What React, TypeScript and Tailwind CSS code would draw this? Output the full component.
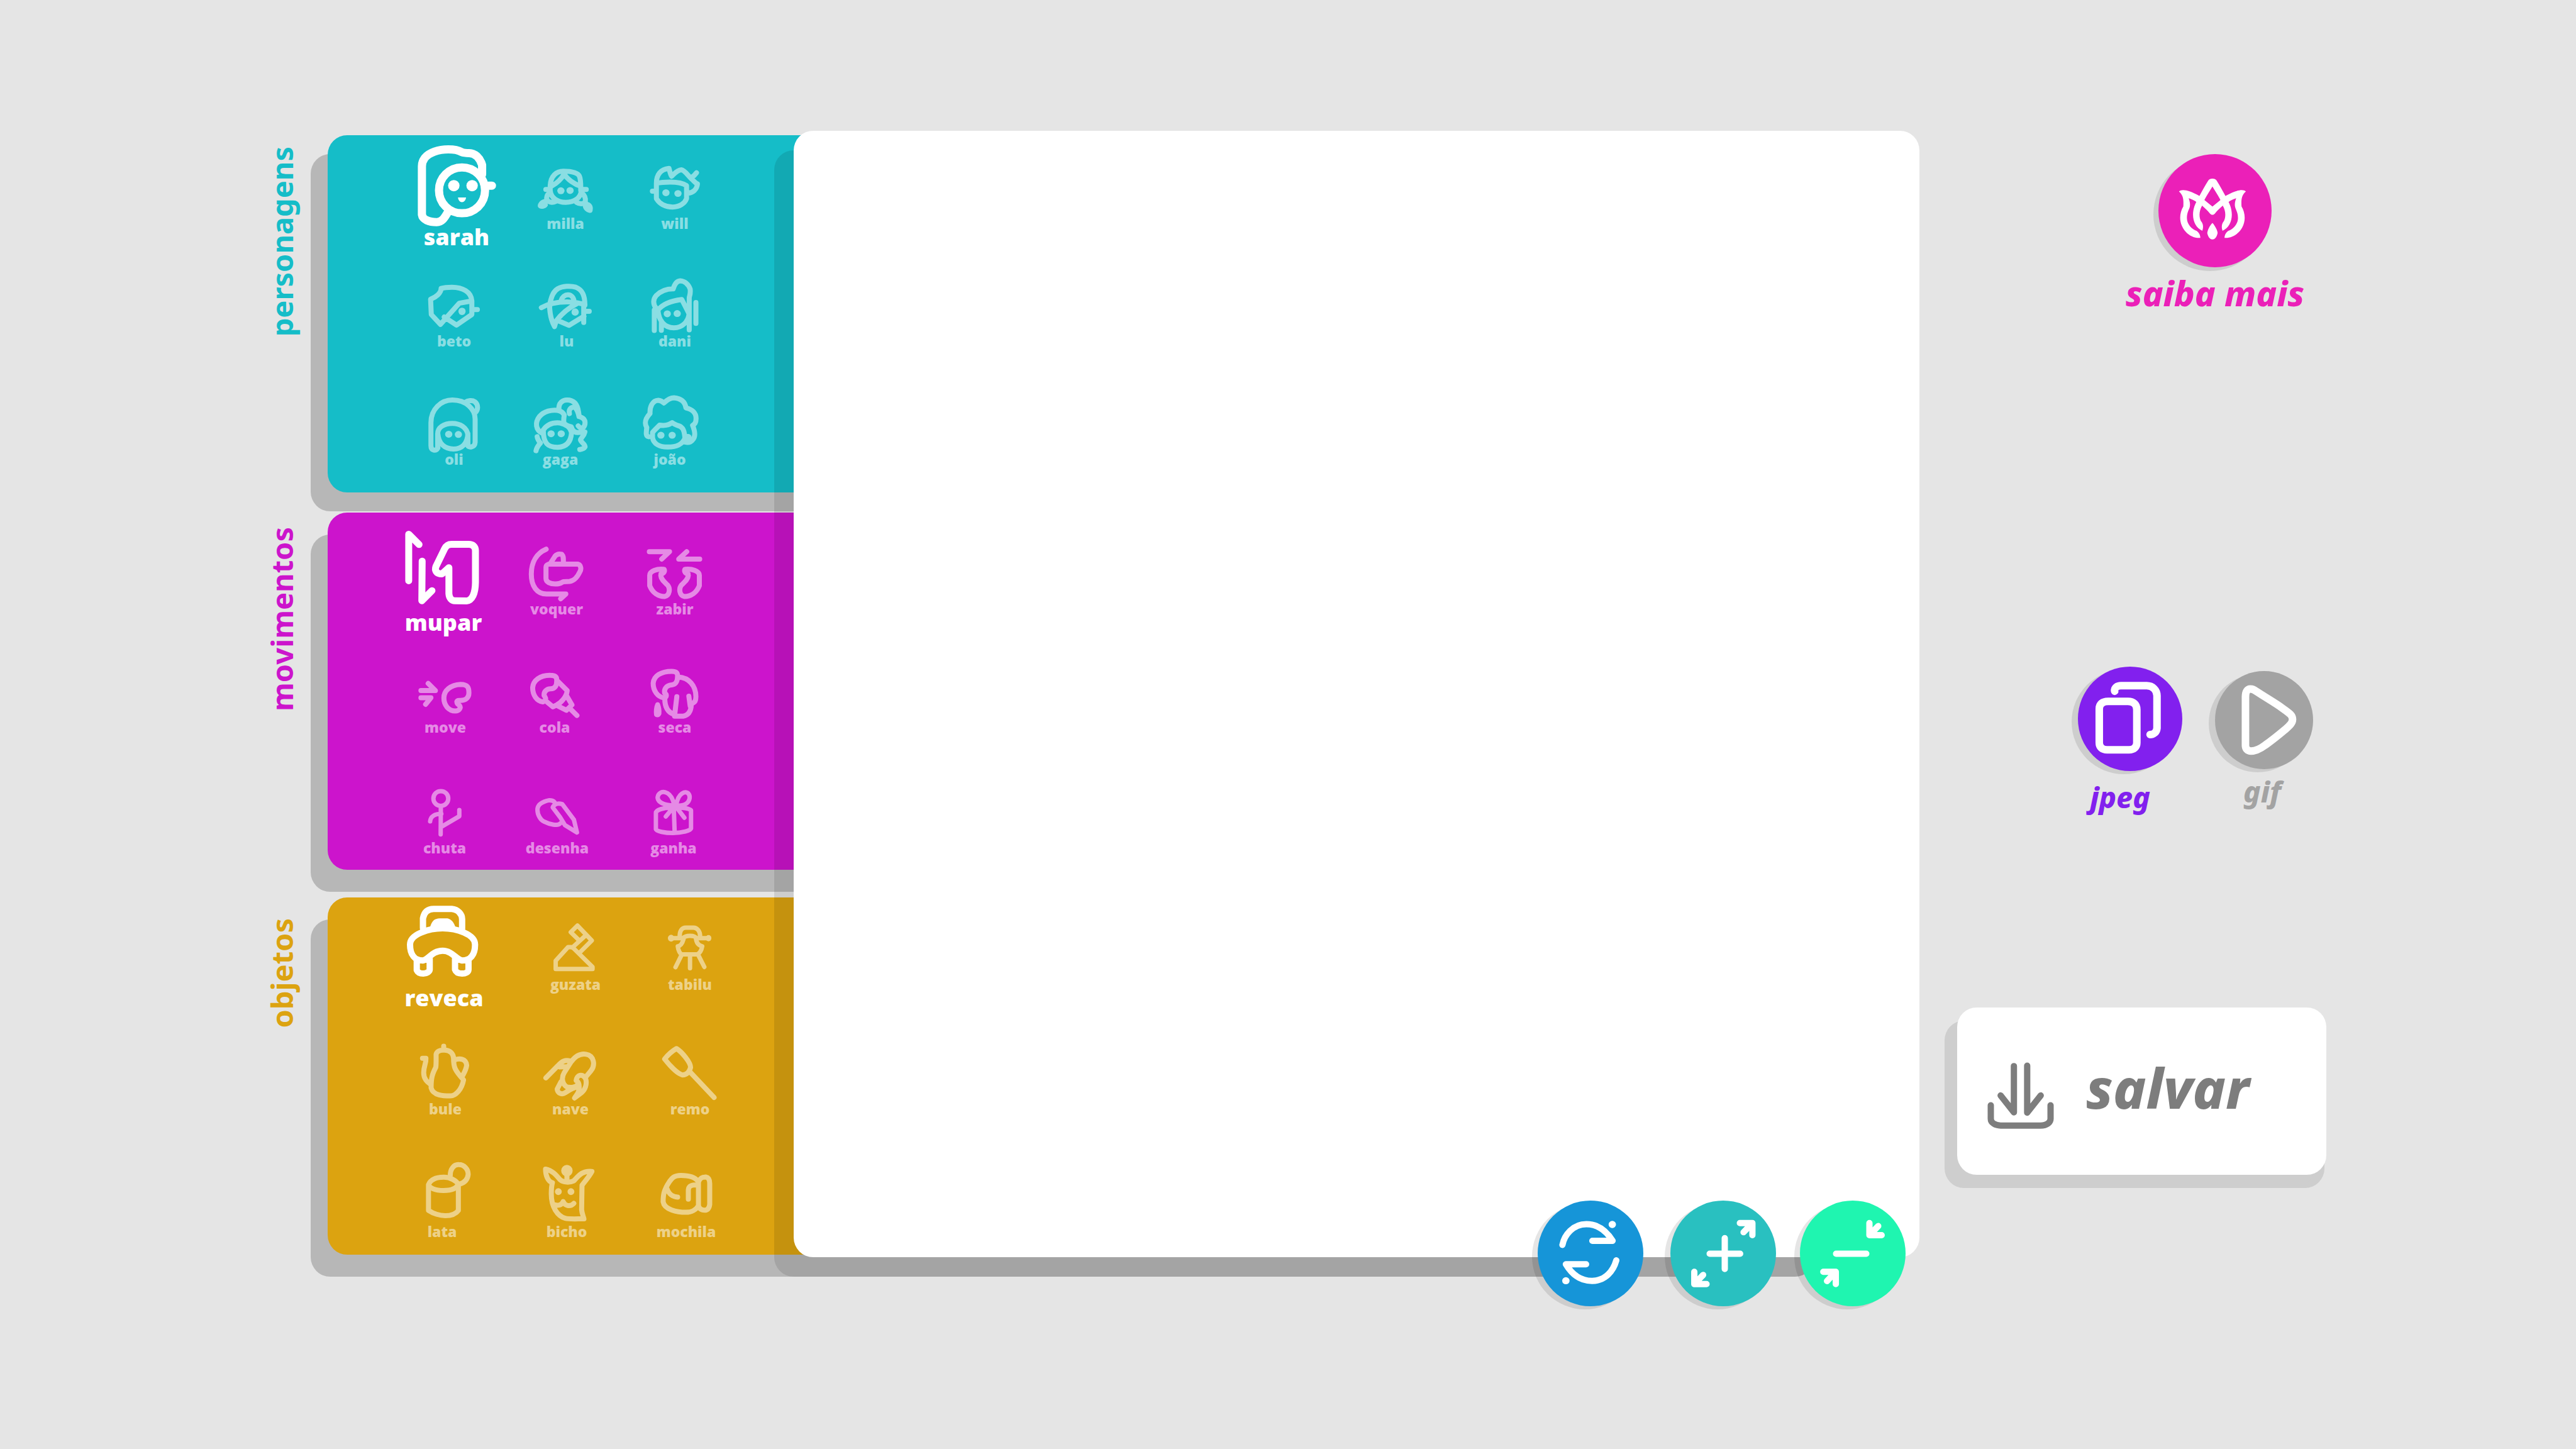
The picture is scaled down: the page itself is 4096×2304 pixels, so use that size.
import type { ReactNode } from "react";

type Dot = [number, number, number, number];

type Glyph = {
  box: string;
  stroke: number;
  d: string;
  solid?: string;
  dots?: Dot[];
};

type Item = { name: string; glyph: Glyph };

type Row = { layout: string; items: Item[] };

type Group = {
  title: string;
  color: string;
  panel: string;
  label: string;
  rows: Row[];
};

function Drawing({ glyph, className }: { glyph: Glyph; className: string }) {
  return (
    <svg
      viewBox={glyph.box}
      preserveAspectRatio="none"
      fill="none"
      stroke="currentColor"
      strokeWidth={glyph.stroke}
      strokeLinecap="round"
      strokeLinejoin="round"
      aria-hidden="true"
      className={`shrink-0 overflow-visible [&_*]:[vector-effect:non-scaling-stroke] ${className}`}
    >
      <path d={glyph.d} />
      {glyph.solid && <path d={glyph.solid} fill="currentColor" stroke="none" />}
      {glyph.dots?.map(([cx, cy, rx, ry]) => (
        <ellipse key={`${cx}-${cy}`} cx={cx} cy={cy} rx={rx} ry={ry} fill="currentColor" stroke="none" />
      ))}
    </svg>
  );
}

const personagens: Row[] = [
  {
    layout: "mt-[12px] pl-[112px] grid-cols-[186px_160px_188px]",
    items: [
      {
        name: "sarah",
        glyph: {
          box: "887 70 496 347",
          stroke: 13,
          d: "M1283 198 V160 C1270 130 1240 112 1208 112 C1190 112 1178 112 1165 108 C1140 98 1110 97 1087 97 C1030 97 975 110 950 132 C936 145 934 152 934 165 V362 C938 382 975 392 1020 392 C1050 392 1065 375 1084 352 M1166 170 C1240 170 1300 212 1300 263 C1300 315 1240 356 1166 356 C1092 356 1033 315 1033 263 C1033 212 1092 170 1166 170 Z M1310 244 H1340",
          solid: "M1143 292 H1190 C1187 304 1178 311 1166 311 C1154 311 1146 304 1143 292 Z",
          dots: [[1119, 244, 33, 23], [1225, 244, 33, 23]],
        },
      },
      {
        name: "milla",
        glyph: {
          box: "97 112 369 286",
          stroke: 8,
          d: "M202 265 V245 C205 205 235 187 270 187 C310 187 345 192 355 207 C363 220 362 235 362 265 M202 265 C205 295 240 313 283 313 C325 313 362 297 365 265 M210 247 C245 232 265 212 275 198 C292 220 330 240 360 247 M179 261 H202 M365 261 H391 M200 275 C185 280 182 292 184 302 C195 315 215 315 232 309 M368 275 C385 285 388 298 386 310 C375 322 355 320 340 313",
          solid: "M184 298 C150 300 135 318 137 330 C142 344 180 342 190 325 Z M385 308 C415 312 427 325 425 340 C424 355 418 357 405 355 C385 350 373 340 372 325 Z",
          dots: [[258, 266, 19, 14], [306, 265, 19, 14]],
        },
      },
      {
        name: "will",
        glyph: {
          box: "669 112 369 286",
          stroke: 8,
          d: "M757 236 C757 200 780 178 823 175 C828 188 830 200 837 207 C850 198 865 182 888 181 C905 182 925 207 943 219 C955 228 962 236 972 238 C970 262 945 275 922 276 M945 210 C955 205 960 200 967 193 M757 236 V298 C775 320 805 332 842 332 C878 332 905 318 915 298 V245 C895 235 865 231 830 231 C805 231 775 233 757 236 M736 268 H757",
          dots: [[807, 274, 19, 14], [870, 277, 19, 14]],
        },
      },
    ],
  },
  {
    layout: "mt-[29px] pl-[102px] grid-cols-[198px_160px_184px]",
    items: [
      {
        name: "beto",
        glyph: {
          box: "918 589 408 286",
          stroke: 8,
          d: "M1065 778 L1136 811 L1225 768 V713 C1222 675 1170 657 1110 657 C1085 657 1065 658 1047 662 C1047 682 1015 698 986 706 L990 768 L1043 808 L1152 722 L1225 713 M1230 748 H1257",
          dots: [[1168, 755, 21, 15]],
        },
      },
      {
        name: "lu",
        glyph: {
          box: "103 589 369 286",
          stroke: 8,
          d: "M200 722 C210 690 218 675 242 663 C265 652 310 651 335 657 C370 668 383 690 383 730 M155 740 C190 725 240 716 300 717 C340 718 365 723 383 727 M198 725 C198 760 208 795 224 817 L232 795 C260 765 300 740 345 722 M240 792 L300 812 L378 775 M377 735 V800 M385 755 H406 M258 712 C270 680 320 680 326 712",
          dots: [[332, 758, 19, 15]],
        },
      },
      {
        name: "dani",
        glyph: {
          box: "669 589 369 286",
          stroke: 8,
          d: "M755 742 C738 725 740 705 755 692 C780 672 810 664 845 664 C852 645 865 632 882 631 C905 632 925 645 934 665 C937 690 929 690 929 702 V830 M765 750 C790 725 840 712 890 707 C900 722 915 745 928 765 M765 750 C770 795 800 822 848 822 C895 822 925 795 928 765 M746 750 V833 M783 795 V832 M964 719 V804",
          dots: [[814, 765, 19, 14], [866, 764, 19, 14]],
        },
      },
    ],
  },
  {
    layout: "mt-[60px] pl-[112px] grid-cols-[178px_160px_188px]",
    items: [
      {
        name: "oli",
        glyph: {
          box: "916 1067 408 286",
          stroke: 8,
          d: "M1026 1308 C1015 1321 986 1320 986 1298 V1205 C986 1150 1045 1113 1110 1113 C1190 1113 1242 1150 1242 1190 V1285 C1240 1308 1202 1306 1200 1298 V1255 C1195 1225 1155 1208 1110 1208 C1060 1208 1025 1225 1025 1250 V1308 M1026 1250 C1030 1290 1065 1312 1117 1312 C1165 1312 1198 1290 1200 1250 M1185 1122 C1200 1115 1225 1113 1240 1120 C1262 1132 1260 1155 1242 1165",
          dots: [[1089, 1252, 21, 14], [1145, 1253, 21, 14]],
        },
      },
      {
        name: "gaga",
        glyph: {
          box: "70 1067 369 286",
          stroke: 8,
          d: "M160 1248 C125 1235 120 1205 145 1180 C170 1158 210 1152 240 1155 C260 1158 270 1166 275 1174 C272 1188 270 1198 274 1208 C285 1216 300 1220 312 1222 C318 1240 335 1250 362 1243 M165 1235 C185 1212 215 1204 250 1206 C285 1212 308 1225 313 1245 C310 1285 285 1304 240 1305 C190 1305 165 1290 165 1235 M247 1150 C245 1125 265 1113 290 1113 C330 1113 345 1135 350 1162 C352 1178 355 1182 365 1184 C390 1192 388 1215 372 1227 C365 1232 352 1222 348 1218 M302 1168 C296 1150 312 1142 328 1142 C342 1150 348 1165 352 1180 M133 1262 C135 1272 142 1280 150 1288 C138 1298 130 1308 127 1319 M383 1243 C378 1262 360 1268 360 1275 C362 1285 383 1290 384 1303 C378 1312 365 1313 356 1314",
          dots: [[206, 1250, 19, 14], [259, 1250, 19, 14]],
        },
      },
      {
        name: "joão",
        glyph: {
          box: "641 1067 369 286",
          stroke: 8,
          d: "M715 1262 C698 1260 702 1245 705 1225 C690 1205 698 1188 722 1168 C720 1140 735 1115 765 1114 C780 1115 788 1120 795 1125 C815 1110 830 1104 848 1104 C875 1106 905 1115 910 1145 C940 1150 965 1165 963 1190 C963 1205 955 1212 945 1216 C955 1235 965 1260 945 1275 C935 1285 920 1287 905 1284 M735 1245 C745 1235 760 1225 772 1215 C795 1218 820 1215 838 1205 C850 1213 870 1217 880 1220 C900 1230 902 1245 905 1268 C890 1295 860 1304 815 1304 C770 1304 740 1290 735 1265 Z",
          dots: [[779, 1256, 19, 14], [838, 1256, 19, 14], [920, 1264, 20, 13]],
        },
      },
    ],
  },
];

const movimentos: Row[] = [
  {
    layout: "mt-[25px] pl-[84px] grid-cols-[200px_160px_216px]",
    items: [
      {
        name: "mupar",
        glyph: {
          box: "810 85 496 347",
          stroke: 11,
          d: "M857 298 V109 L917 151 M935 218 L933 379 L992 338 M1244 305 V175 C1243 158 1228 150 1205 150 H1105 C1085 150 1075 155 1065 168 L1015 240 C1007 255 1015 270 1050 270 L1090 245 V350 C1092 368 1105 379 1125 379 L1192 380 C1225 378 1243 350 1244 305 Z",
        },
      },
      {
        name: "voquer",
        glyph: {
          box: "48 130 369 286",
          stroke: 8,
          d: "M178 174 C130 190 100 225 100 275 C100 325 130 356 180 356 H281 L254 375 M177 247 C177 240 180 238 190 235 H345 C360 238 363 255 355 265 C340 290 325 303 300 305 L268 306 C250 315 240 315 225 315 C200 315 177 308 177 293 Z M200 232 L225 202 C235 193 250 193 260 195 C270 203 268 212 268 235",
        },
      },
      {
        name: "zabir",
        glyph: {
          box: "668 130 369 286",
          stroke: 8,
          d: "M719 184 H825 L784 214 M983 214 H873 L915 184 M780 275 C802 272 800 256 795 256 C760 253 721 262 721 280 V322 C735 350 765 366 800 366 C825 362 830 335 815 320 C795 305 780 295 779 281 M922 275 C900 272 902 256 907 256 C942 253 981 262 981 280 V322 C967 350 937 366 902 366 C877 362 872 335 887 320 C907 305 922 295 923 281",
        },
      },
    ],
  },
  {
    layout: "mt-[30px] pl-[93px] grid-cols-[188px_160px_222px]",
    items: [
      {
        name: "move",
        glyph: {
          box: "866 607 408 286",
          stroke: 8,
          d: "M929 745 H1013 L971 716 M929 774 H987 L956 801 M1158 785 C1185 785 1207 775 1207 755 C1207 735 1203 720 1158 720 C1100 722 1062 745 1062 775 C1062 805 1090 828 1128 828 C1152 828 1162 815 1153 806 C1142 800 1137 797 1137 790 C1140 783 1150 785 1158 785",
        },
      },
      {
        name: "cola",
        glyph: {
          box: "38 607 369 286",
          stroke: 8,
          d: "M160 791 C130 788 107 765 107 733 C110 705 145 682 200 683 C225 683 233 690 233 700 C235 725 225 738 200 738 C180 738 165 750 167 765 C175 775 178 778 172 785 L213 811 L232 804 C255 795 285 770 288 745 L240 708 M284 765 L313 803 L284 825 L232 805 M305 820 L339 846",
        },
      },
      {
        name: "seca",
        glyph: {
          box: "667 607 369 286",
          stroke: 8,
          d: "M795 775 C760 770 738 745 738 715 C742 685 780 667 835 667 C860 667 866 675 866 685 C866 710 855 720 835 722 C805 724 795 740 798 755 C812 762 808 770 799 775 C798 815 820 835 848 842 M870 690 C925 692 962 725 962 770 C962 785 955 793 948 795 M862 770 L850 849 H895 C925 845 937 825 938 800 M925 768 L932 808",
          solid: "M750 798 C755 790 768 790 773 798 C780 812 783 825 781 840 C775 857 750 857 743 845 C740 830 742 812 750 798 Z",
        },
      },
    ],
  },
  {
    layout: "mt-[64px] pl-[87px] grid-cols-[198px_160px_210px]",
    items: [
      {
        name: "chuta",
        glyph: {
          box: "863 1096 408 286",
          stroke: 7,
          d: "M1045 1152 C1069 1152 1088 1165 1088 1182 C1088 1199 1069 1212 1045 1212 C1021 1212 1002 1199 1002 1182 C1002 1165 1021 1152 1045 1152 Z M1045 1212 L1044 1328 M1048 1244 C1010 1244 985 1255 983 1275 M1048 1297 L1152 1254 V1229",
        },
      },
      {
        name: "desenha",
        glyph: {
          box: "51 1096 369 286",
          stroke: 7,
          d: "M222 1197 C215 1190 205 1189 195 1189 C155 1195 132 1208 132 1228 C132 1250 150 1270 165 1275 C195 1287 240 1295 252 1283 M212 1218 C220 1204 240 1200 262 1205 L323 1268 L339 1320 L276 1290 L250 1257 Z",
        },
      },
      {
        name: "ganha",
        glyph: {
          box: "661 1096 369 286",
          stroke: 7,
          d: "M840 1219 C790 1218 753 1230 753 1240 V1307 C755 1315 800 1322 842 1322 C890 1322 935 1312 937 1304 V1230 C925 1222 890 1218 840 1219 M847 1225 L851 1315 M848 1210 C790 1210 762 1195 762 1177 C768 1145 830 1145 848 1205 M858 1210 C910 1215 930 1195 930 1175 C925 1145 875 1150 860 1205 M848 1215 L805 1255 M858 1215 L902 1260",
        },
      },
    ],
  },
];

const objetos: Row[] = [
  {
    layout: "mt-[10px] pl-[56px] grid-cols-[258px_160px_204px]",
    items: [
      {
        name: "reveca",
        glyph: {
          box: "812 76 496 327",
          stroke: 10,
          d: "M1052 170 C975 170 863 192 863 232 C863 270 890 293 937 293 C970 290 990 256 1052 256 C1110 256 1130 290 1165 293 C1215 293 1240 270 1240 232 C1240 192 1130 170 1052 170 Z M938 170 V132 C945 108 965 96 1000 96 H1105 C1140 98 1165 115 1165 135 V172 M902 290 V330 C910 343 935 343 940 343 C960 343 977 335 977 328 V285 M1124 285 V328 C1130 340 1150 343 1165 343 C1185 343 1201 338 1202 328 V290",
          solid: "M978 168 C990 140 1005 133 1035 132 H1080 C1105 136 1120 150 1127 168 Z",
        },
      },
      {
        name: "guzata",
        glyph: {
          box: "147 115 369 269",
          stroke: 7,
          d: "M228 294 L293 242 H315 L421 318 V326 H228 Z M315 244 L384 198 M307 185 L342 160 L417 217 L358 260 M307 185 L352 217",
        },
      },
      {
        name: "tabilu",
        glyph: {
          box: "747 115 369 269",
          stroke: 7,
          d: "M878 200 C878 180 890 168 910 168 H950 C970 168 985 182 985 200 M830 208 H895 C905 200 920 199 932 199 C950 199 960 201 965 208 H1025 M898 212 C892 228 882 238 868 239 C870 255 880 268 890 270 H970 C985 265 992 255 996 239 C978 236 965 225 963 208 M888 272 L856 319 M932 272 V323 M975 272 L1007 318",
          dots: [[833, 208, 17, 13], [1029, 208, 15, 12]],
        },
      },
    ],
  },
  {
    layout: "mt-[40px] pl-[68px] grid-cols-[238px_160px_220px]",
    items: [
      {
        name: "bule",
        glyph: {
          box: "866 589 408 269",
          stroke: 8,
          d: "M1017 650 C1020 640 1040 633 1060 634 C1100 632 1118 650 1118 665 C1118 700 1125 710 1176 748 C1165 785 1130 809 1100 809 C1060 809 1000 808 988 778 C988 740 995 725 1015 700 C1018 690 1017 670 1017 650 Z M1061 619 V632 M938 665 H958 C960 685 945 695 945 720 C945 745 965 755 985 765 M1125 671 C1150 665 1190 665 1194 692 C1190 712 1175 725 1168 735",
        },
      },
      {
        name: "nave",
        glyph: {
          box: "123 589 369 269",
          stroke: 8,
          d: "M179 740 L240 695 C265 675 280 671 305 675 M250 698 L290 697 M392 733 L415 713 C440 690 430 655 390 650 C350 645 325 665 310 680 L275 720 C258 740 265 765 290 775 C320 780 345 770 345 765 M258 755 L238 783 C240 800 265 805 280 797 C300 787 325 774 350 775 M338 750 C340 730 370 720 388 745 C395 765 385 785 365 797 L329 817 C345 800 358 790 352 765 C350 755 340 752 338 750",
        },
      },
      {
        name: "remo",
        glyph: {
          box: "749 589 369 269",
          stroke: 8,
          d: "M863 628 C835 640 815 655 801 668 C830 695 870 725 895 729 C915 728 930 720 937 700 C937 680 890 640 863 628 Z M935 718 L1060 815",
        },
      },
    ],
  },
  {
    layout: "mt-[67px] pl-[64px] grid-cols-[236px_160px_220px]",
    items: [
      {
        name: "lata",
        glyph: {
          box: "848 1059 408 269",
          stroke: 8,
          d: "M973 1150 C985 1130 1020 1121 1062 1121 C1100 1121 1135 1135 1145 1148 C1135 1165 1100 1172 1060 1172 C1010 1172 980 1162 973 1150 Z M973 1150 V1248 C1000 1260 1040 1268 1070 1268 C1100 1268 1130 1263 1146 1248 V1148 M1099 1116 C1098 1090 1120 1072 1148 1073 C1180 1073 1203 1090 1203 1110 C1200 1130 1180 1142 1155 1147",
        },
      },
      {
        name: "bicho",
        glyph: {
          box: "103 1059 369 269",
          stroke: 8,
          d: "M177 1090 C210 1095 230 1110 252 1130 C270 1142 305 1142 325 1135 C350 1115 370 1095 420 1099 C405 1120 385 1135 368 1152 L366 1245 C368 1262 375 1270 378 1280 C340 1280 300 1282 280 1278 C240 1270 207 1235 207 1185 C207 1160 210 1150 213 1142 C190 1138 177 1115 177 1090 Z M289 1110 V1138 M215 1224 C240 1232 262 1228 269 1214 C278 1230 305 1236 325 1221",
          dots: [[289, 1096, 30, 22], [244, 1176, 18, 13], [310, 1176, 18, 13]],
        },
      },
      {
        name: "mochila",
        glyph: {
          box: "728 1059 369 269",
          stroke: 8,
          d: "M973 1135 C955 1118 915 1114 885 1114 C845 1114 835 1128 825 1138 C795 1170 792 1190 792 1215 C798 1245 865 1255 912 1255 C940 1255 965 1245 977 1230 M977 1140 C985 1120 1005 1120 1015 1120 C1030 1122 1036 1130 1036 1145 V1225 C1033 1240 1025 1247 1010 1247 C990 1247 978 1240 977 1228 Z M812 1165 C825 1190 845 1196 868 1197 M924 1205 V1170 C925 1155 940 1150 965 1150",
        },
      },
    ],
  },
];

const groups: Group[] = [
  {
    title: "personagens",
    color: "text-[#15bdc8]",
    panel: "bg-[#15bdc8] shadow-[-27px_30px_0_rgba(0,0,0,0.2)]",
    label: "pt-[18px]",
    rows: personagens,
  },
  {
    title: "movimentos",
    color: "text-[#cc14cc]",
    panel: "bg-[#cc14cc] shadow-[-27px_35px_0_rgba(0,0,0,0.2)]",
    label: "pt-[23px]",
    rows: movimentos,
  },
  {
    title: "objetos",
    color: "text-[#dca310]",
    panel: "bg-[#dca310] shadow-[-27px_35px_0_rgba(0,0,0,0.2)]",
    label: "pt-[33px]",
    rows: objetos,
  },
];

function Choice({ item, active, lowered }: { item: Item; active: boolean; lowered: boolean }) {
  if (active) {
    return (
      <button type="button" aria-pressed="true" className="flex flex-col items-center text-white">
        <Drawing glyph={item.glyph} className="-mb-[10px] size-[136px]" />
        <span className="text-[36px] leading-[48px]">{item.name}</span>
      </button>
    );
  }
  return (
    <button
      type="button"
      aria-pressed="false"
      className={`flex flex-col items-center text-white opacity-50 ${lowered ? "mt-[16px]" : ""}`}
    >
      <Drawing glyph={item.glyph} className="-mb-[16px] size-[112px]" />
      <span className="text-[23px] leading-[32px]">{item.name}</span>
    </button>
  );
}

function GroupPanel({ group }: { group: Group }) {
  return (
    <section className="flex">
      <div className={`mr-[43px] w-[60px] shrink-0 ${group.label}`}>
        <h2
          className={`rotate-180 font-['Noto_Sans',sans-serif] text-[47px] leading-[60px] font-bold [writing-mode:vertical-rl] ${group.color}`}
        >
          {group.title}
        </h2>
      </div>
      <div className={`mr-[140px] flex min-h-[568px] flex-1 flex-col rounded-[31px] ${group.panel}`}>
        {group.rows.map((row, r) => (
          <div key={row.items[0].name} className={`grid items-start ${row.layout}`}>
            {row.items.map((item, i) => (
              <Choice key={item.name} item={item} active={r === 0 && i === 0} lowered={r === 0} />
            ))}
          </div>
        ))}
      </div>
    </section>
  );
}

const sync: Glyph = {
  box: "146 138 371 654",
  stroke: 10,
  d: "M233 412 C240 350 270 284 317 284 C355 284 385 320 409 387 H338 M422 508 C412 570 385 635 337 635 C300 635 268 600 245 532 H316",
  dots: [[408, 286, 13, 22], [245, 634, 13, 22]],
};

const enlarge: Glyph = {
  box: "613 138 371 654",
  stroke: 10,
  d: "M804 371 V561 M751 467 H858 M857 277 H901 V352 M901 277 L870 334 M697 579 V655 H740 M697 655 L728 598",
};

const reduce: Glyph = {
  box: "1069 138 371 654",
  stroke: 10,
  d: "M1196 467 H1302 M1313 277 V352 H1356 M1313 352 L1344 296 M1151 579 H1195 V655 M1195 579 L1164 636",
};

const copies: Glyph = {
  box: "152 120 528 645",
  stroke: 12,
  d: "M305 335 H405 C435 335 450 355 450 385 V590 C450 618 435 634 410 634 H300 C275 634 260 618 260 590 V380 C260 352 275 335 305 335 Z M338 272 C335 250 350 238 370 238 H500 C530 238 552 265 552 300 V500 C550 525 535 540 517 540",
};

const play: Glyph = {
  box: "846 149 496 608",
  stroke: 12,
  d: "M1000 310 C1000 275 1010 260 1025 260 C1035 260 1045 265 1055 275 C1100 312 1145 342 1190 382 C1225 412 1238 425 1238 448 C1238 470 1225 485 1200 512 C1165 548 1130 582 1100 608 C1065 640 1045 645 1028 645 C1010 645 1000 630 1000 610 Z",
};

const download: Glyph = {
  box: "210 448 251 415",
  stroke: 10,
  d: "M310 472 V760 L260 655 M360 470 V762 L411 655 M223 716 V800 C223 825 240 842 260 842 H410 C435 842 448 822 448 800 V716",
};

function Lotus() {
  return (
    <svg
      viewBox="561 116 572 701"
      preserveAspectRatio="none"
      fill="currentColor"
      aria-hidden="true"
      className="size-[180px]"
    >
      {["", "matrix(-1 0 0 1 1668 0)"].map((flip) => (
        <g key={flip} transform={flip || undefined}>
          <path d="M773 635 C720 640 671 580 671 510 C671 485 677 460 687 440 C689 400 687 370 665 348 C680 330 715 340 768 375 L838 445 L834 492 C830 492 826 490 822 485 C800 452 770 420 752 412 C745 405 730 395 714 390 C720 410 722 425 720 440 C717 460 705 475 705 512 C705 550 730 582 755 592 C768 605 773 620 773 635 Z" />
          <path d="M835 268 C824 268 817 272 813 280 C795 315 782 345 768 376 C745 425 736 455 736 492 C736 535 752 575 783 591 C789 570 787 550 780 538 C765 515 765 470 781 437 C790 400 815 355 835 315 Z" />
        </g>
      ))}
      <path d="M834 542 C848 560 860 590 860 605 C856 632 845 645 834 645 C823 645 812 632 808 605 C809 585 820 560 834 542 Z" />
    </svg>
  );
}

function ToolButton({ label, className, children }: { label: string; className: string; children: ReactNode }) {
  return (
    <button
      type="button"
      aria-label={label}
      className={`size-[168px] rounded-full text-white shadow-[-9px_5px_0_rgba(0,0,0,0.1)] ${className}`}
    >
      {children}
    </button>
  );
}

export default function App() {
  return (
    <main className="flex min-h-screen items-start bg-[#e5e5e5] pt-[208px] pr-[397px] pl-[418px] font-['Open_Sans',sans-serif] font-extrabold">
      <div className="grid flex-1 grid-cols-[844px_1fr]">
        <div className="col-span-2 col-start-1 row-start-1 flex flex-col pt-[7px] pb-[4px]">
          <GroupPanel group={groups[0]} />
          <div className="h-[32px]" />
          <GroupPanel group={groups[1]} />
          <div className="h-[44px]" />
          <GroupPanel group={groups[2]} />
        </div>

        <div className="relative col-start-2 row-start-1">
          <div className="absolute top-[31px] right-[167px] -bottom-[31px] -left-[31px] rounded-[31px] bg-black/10" />
          <div role="img" aria-label="tela" className="absolute inset-0 rounded-[31px] bg-white" />
          <div className="absolute right-[22px] -bottom-[78px] flex">
            <ToolButton label="recomeçar" className="mr-[43px] bg-[#1695d8]">
              <Drawing glyph={sync} className="size-[168px]" />
            </ToolButton>
            <ToolButton label="aumentar" className="mr-[38px] bg-[#29c0c0]">
              <Drawing glyph={enlarge} className="size-[168px]" />
            </ToolButton>
            <ToolButton label="diminuir" className="bg-[#1ff5b0]">
              <Drawing glyph={reduce} className="size-[168px]" />
            </ToolButton>
          </div>
        </div>
      </div>

      <aside className="ml-[60px] flex w-[587px] flex-col font-['Noto_Sans',sans-serif] italic">
        <a href="#saiba-mais" className="mt-[37px] ml-[256px] flex w-[308px] flex-col items-center text-[#eb20b8]">
          <span className="rounded-full bg-[#eb20b8] text-white shadow-[-8px_6px_0_rgba(0,0,0,0.1)]">
            <Lotus />
          </span>
          <span className="mt-[5px] text-[55px] leading-[72px] whitespace-nowrap">saiba mais</span>
        </a>

        <div className="mt-[558px] ml-[192px] flex items-start">
          <button type="button" className="mr-[52px] flex flex-col items-center text-[#8220ee]">
            <span className="rounded-full bg-[#8220ee] text-white shadow-[-10px_5px_0_rgba(0,0,0,0.1)]">
              <Drawing glyph={copies} className="size-[166px]" />
            </span>
            <span className="mt-[11px] pr-[32px] text-[46px] leading-[60px]">jpeg</span>
          </button>
          <button type="button" className="mt-[7px] flex flex-col items-center text-[#a3a3a3]">
            <span className="rounded-full bg-[#a3a3a3] text-white shadow-[-10px_5px_0_rgba(0,0,0,0.1)]">
              <Drawing glyph={play} className="size-[156px]" />
            </span>
            <span className="mt-[5px] pr-[6px] text-[46px] leading-[60px]">gif</span>
          </button>
        </div>

        <button
          type="button"
          className="mt-[305px] flex h-[266px] items-start rounded-[31px] bg-white pl-[48px] text-[#7d7d7d] shadow-[-20px_21px_0_#cecece,-3px_21px_0_#cecece]"
        >
          <Drawing glyph={download} className="mt-[87px] mr-[51px] size-[106px]" />
          <span className="mt-[67px] text-[88px] leading-[120px]">salvar</span>
        </button>
      </aside>
    </main>
  );
}
